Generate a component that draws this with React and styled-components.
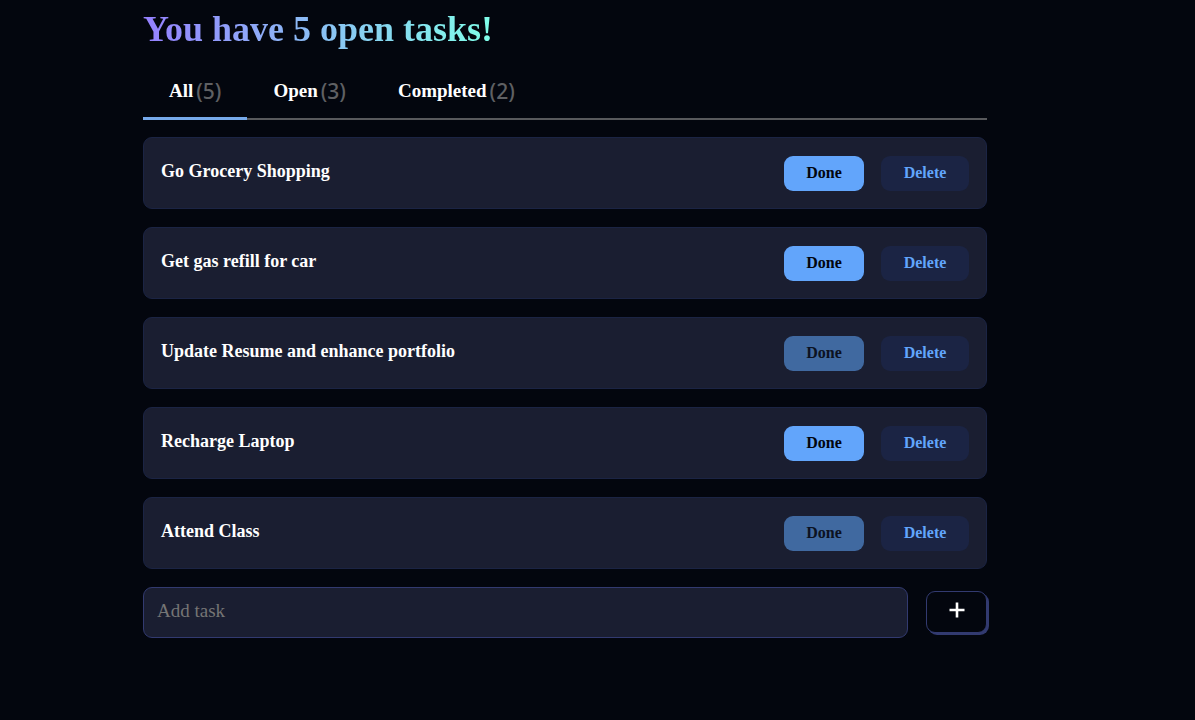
import React, { useState } from "react";
import styled, { createGlobalStyle } from "styled-components";

const GlobalStyle = createGlobalStyle`
  * { box-sizing: border-box; }
  body {
    margin: 0;
    background: #03060e;
    color: #ffffff;
    font-family: "Liberation Serif", serif;
  }
  button, input { font-family: inherit; }
`;

const Page = styled.main`
  padding: 7px 208px 48px 143px;
`;

const Title = styled.h1`
  width: fit-content;
  margin: 0;
  font-size: 36px;
  line-height: 44px;
  font-weight: 700;
  white-space: nowrap;
  color: transparent;
  background: linear-gradient(90deg, #9580ff, #80ffea);
  background-clip: text;
  -webkit-background-clip: text;
`;

const Tabs = styled.nav`
  display: flex;
  height: 54px;
  margin: 15px 0 17px;
  box-shadow: inset 0 -2px #58595c;
`;

const Tab = styled.button`
  display: flex;
  align-items: center;
  gap: 3px;
  padding: 0 26px 2px;
  border: 0;
  border-bottom: 3px solid ${(p) => (p.$active ? "#76a9ea" : "transparent")};
  background: none;
  color: #ffffff;
  font-size: 19px;
  line-height: 24px;
  font-weight: 700;
  cursor: pointer;
`;

const Count = styled.span`
  color: #5f6063;
  font-family: "Noto Sans", sans-serif;
  font-size: 21px;
  font-weight: 500;
`;

const List = styled.ul`
  display: flex;
  flex-direction: column;
  gap: 18px;
  margin: 0;
  padding: 0;
  list-style: none;
`;

const Task = styled.li`
  display: flex;
  align-items: center;
  gap: 17px;
  height: 72px;
  padding: 0 17px;
  border: 1px solid #1b2444;
  border-radius: 9px;
  background: #1a1e31;
`;

const TaskName = styled.span`
  flex: 1;
  padding-bottom: 4px;
  font-size: 18px;
  line-height: 24px;
  font-weight: 700;
`;

const Action = styled.button`
  height: 35px;
  padding: 0 22px;
  border: 0;
  border-radius: 9px;
  font-size: 16px;
  line-height: 20px;
  font-weight: 700;
  cursor: pointer;
`;

const DoneButton = styled(Action)`
  width: 80px;
  background: #62a5fb;
  color: #03060e;
  &:disabled {
    background: #4069a0;
    color: #0c1222;
    cursor: default;
  }
`;

const DeleteButton = styled(Action)`
  width: 88px;
  background: #1b2444;
  color: #62a5fb;
`;

const AddForm = styled.form`
  display: flex;
  align-items: center;
  gap: 18px;
  margin-top: 18px;
`;

const TaskInput = styled.input`
  flex: 1;
  min-width: 0;
  height: 51px;
  padding: 0 13px 3px;
  border: 1px solid #323a70;
  border-radius: 9px;
  background: #1a1e31;
  color: #ffffff;
  font-size: 19px;
  &::placeholder {
    color: #757575;
    opacity: 1;
  }
`;

const AddButton = styled.button`
  display: grid;
  place-items: center;
  width: 61px;
  height: 42px;
  margin-bottom: 1px;
  padding: 0 0 4px;
  border: 1px solid #323a70;
  border-radius: 9px;
  background: #03060e;
  box-shadow: 2px 2px #323a70;
  color: #ffffff;
  cursor: pointer;
`;

const initialTasks = [
  { name: "Go Grocery Shopping", done: false },
  { name: "Get gas refill for car", done: false },
  { name: "Update Resume and enhance portfolio", done: true },
  { name: "Recharge Laptop", done: false },
  { name: "Attend Class", done: true },
];

export default function App() {
  const [tasks, setTasks] = useState(initialTasks);
  const [filter, setFilter] = useState("All");
  const [draft, setDraft] = useState("");

  const groups = {
    All: tasks,
    Open: tasks.filter((t) => !t.done),
    Completed: tasks.filter((t) => t.done),
  };

  const addTask = (event) => {
    event.preventDefault();
    if (!draft.trim()) return;
    setTasks([...tasks, { name: draft.trim(), done: false }]);
    setDraft("");
  };

  return (
    <>
      <GlobalStyle />
      <Page>
        <Title>You have {tasks.length} open tasks!</Title>
        <Tabs>
          {Object.keys(groups).map((name) => (
            <Tab key={name} type="button" $active={filter === name} onClick={() => setFilter(name)}>
              {name}
              <Count>({groups[name].length})</Count>
            </Tab>
          ))}
        </Tabs>
        <List>
          {groups[filter].map((task) => (
            <Task key={task.name}>
              <TaskName>{task.name}</TaskName>
              <DoneButton
                type="button"
                disabled={task.done}
                onClick={() => setTasks(tasks.map((t) => (t === task ? { ...t, done: true } : t)))}
              >
                Done
              </DoneButton>
              <DeleteButton type="button" onClick={() => setTasks(tasks.filter((t) => t !== task))}>
                Delete
              </DeleteButton>
            </Task>
          ))}
        </List>
        <AddForm onSubmit={addTask}>
          <TaskInput
            aria-label="Add task"
            placeholder="Add task"
            value={draft}
            onChange={(event) => setDraft(event.target.value)}
          />
          <AddButton type="submit" aria-label="Add">
            <svg width="16" height="16" viewBox="0 0 16 16" aria-hidden="true">
              <path d="M8 .5v15M.5 8h15" stroke="currentColor" strokeWidth="2.6" fill="none" />
            </svg>
          </AddButton>
        </AddForm>
      </Page>
    </>
  );
}
